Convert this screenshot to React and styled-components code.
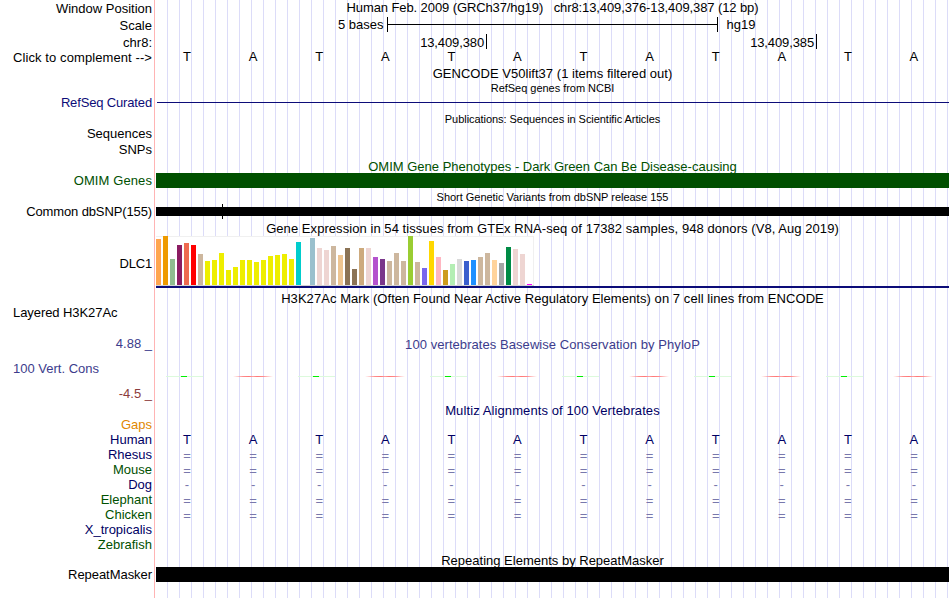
import React from "react";
import styled, { createGlobalStyle } from "styled-components";

const BASES = "TATATATATATA".split("");

// height in px and colour of every GTEx tissue
const TISSUES = [
  [46, "#ffa54f"], [49, "#ee9a00"], [26, "#8fbc8f"], [40, "#8b1c62"],
  [42, "#ee6a50"], [40, "#ff0000"], [31, "#cdb79e"], [24, "#eeee00"],
  [25, "#eeee00"], [32, "#eeee00"], [15, "#eeee00"], [18, "#eeee00"],
  [25, "#eeee00"], [25, "#eeee00"], [23, "#eeee00"], [25, "#eeee00"],
  [29, "#eeee00"], [30, "#eeee00"], [31, "#eeee00"], [26, "#eeee00"],
  [43, "#00cdcd"], [0, "#ee82ee"], [47, "#9ac0cd"], [37, "#eed5d2"],
  [35, "#eed5d2"], [39, "#cdb79e"], [30, "#eec591"], [37, "#8b7355"],
  [16, "#8b7355"], [37, "#cdaa7d"], [37, "#eed5d2"], [28, "#b452cd"],
  [26, "#7a378b"], [24, "#cdb79e"], [32, "#cdb79e"], [24, "#cdb79e"],
  [49, "#9acd32"], [23, "#cdb79e"], [17, "#7a67ee"], [44, "#ffd700"],
  [28, "#ffb6c1"], [15, "#cd9b1d"], [21, "#b4eeb4"], [26, "#d9d9d9"],
  [24, "#3a5fcd"], [25, "#1e90ff"], [28, "#cdb79e"], [32, "#cdb79e"],
  [25, "#ffd39b"], [22, "#a6a6a6"], [38, "#008b45"], [36, "#eed5d2"],
  [31, "#eed5d2"], [1, "#ff00ff"],
];

const SPECIES = [
  { name: "Rhesus", color: "#000064", mark: "=" },
  { name: "Mouse", color: "#005000", mark: "=" },
  { name: "Dog", color: "#000064", mark: "-" },
  { name: "Elephant", color: "#005000", mark: "=" },
  { name: "Chicken", color: "#005000", mark: "=" },
  { name: "X_tropicalis", color: "#000064" },
  { name: "Zebrafish", color: "#005000" },
];

const Track = ({ height, label, color, top, spacing, left, children }) => (
  <Row $height={height}>
    <Side $left={left}>
      <Label $color={color} $top={top} $spacing={spacing}>
        {label}
      </Label>
    </Side>
    <Data>{children}</Data>
  </Row>
);

const Sequence = ({ items, color, top = -1 }) => (
  <Letters $color={color} $top={top}>
    {items.map((item, i) => (
      <span key={i}>{item}</span>
    ))}
  </Letters>
);

const App = () => {
  return (
    <>
      <GlobalStyle />
      <Browser>
        <Track height={17} label="Window Position" top={1}>
          <Title $spacing={-0.1}>
            Human Feb. 2009 (GRCh37/hg19) &nbsp; chr8:13,409,376-13,409,387 (12 bp)
          </Title>
        </Track>
        <Track height={17} label="Scale" top={1}>
          <Scale>
            <span>5 bases</span>
            <Ruler />
            <span>hg19</span>
          </Scale>
        </Track>
        <Track height={16} label="chr8:" top={1}>
          <Positions>
            <Position>13,409,380</Position>
            <Position>13,409,385</Position>
          </Positions>
        </Track>
        <Track height={16} label="Click to complement -->" spacing={0.09}>
          <Sequence items={BASES} />
        </Track>
        <Track height={16}>
          <Title $spacing={0.03}>GENCODE V50lift37 (1 items filtered out)</Title>
        </Track>
        <Track height={13}>
          <SmallTitle $spacing={-0.03}>RefSeq genes from NCBI</SmallTitle>
        </Track>
        <Track
          height={17}
          label="RefSeq Curated"
          color="#0c0c78"
          spacing={-0.15}
        >
          <Intron />
        </Track>
        <Track height={14}>
          <SmallTitle $top={1} $spacing={-0.05}>
            Publications: Sequences in Scientific Articles
          </SmallTitle>
        </Track>
        <Track height={16} label="Sequences" />
        <Track height={16} label="SNPs" />
        <Track height={15}>
          <Title $top={1} $color="#005000">
            OMIM Gene Phenotypes - Dark Green Can Be Disease-causing
          </Title>
        </Track>
        <Track height={15} label="OMIM Genes" color="#005000" spacing={0.1}>
          <Block $color="#005000" />
        </Track>
        <Track height={16}>
          <SmallTitle $top={3} $spacing={-0.03}>
            Short Genetic Variants from dbSNP release 155
          </SmallTitle>
        </Track>
        <Track height={15} label="Common dbSNP(155)" spacing={-0.12}>
          <Variants>
            <Insertion />
          </Variants>
        </Track>
        <Track height={17}>
          <Title $top={2} $spacing={0.06}>
            Gene Expression in 54 tissues from GTEx RNA-seq of 17382 samples,
            948 donors (V8, Aug 2019)
          </Title>
        </Track>
        <Track height={52} label="DLC1" top={20} spacing={-0.2}>
          <Chart>
            {TISSUES.map(([height, color], i) => (
              <Bar key={i} $color={color} style={{ height }} />
            ))}
          </Chart>
          <GeneLine />
        </Track>
        <Track height={18}>
          <Title $top={3} $spacing={0.06}>
            H3K27Ac Mark (Often Found Near Active Regulatory Elements) on 7
            cell lines from ENCODE
          </Title>
        </Track>
        <Track
          height={31}
          label="Layered H3K27Ac"
          top={-1}
          spacing={-0.07}
          left
        />
        <Track height={16} label="4.88 _" color="#3c3c8c" top={-1}>
          <Title $color="#3c3c8c" $spacing={0.06}>
            100 vertebrates Basewise Conservation by PhyloP
          </Title>
        </Track>
        <Track height={32} label="100 Vert. Cons" color="#3c3c8c" top={8} left>
          <Conservation>
            {BASES.map((base, i) =>
              base === "T" ? <Conserved key={i} /> : <Fast key={i} />
            )}
          </Conservation>
        </Track>
        <Track height={17} label="-4.5 _" color="#8c3c3c" top={1} />
        <Track height={16}>
          <Title $top={1} $color="#000064" $spacing={0.1}>
            Multiz Alignments of 100 Vertebrates
          </Title>
        </Track>
        <Track height={15} label="Gaps" color="#e18700" top={-1} />
        <Track height={15} label="Human" color="#000064" top={-1}>
          <Sequence items={BASES} color="#000064" />
        </Track>
        {SPECIES.map(({ name, color, mark }) => (
          <Track key={name} height={15} label={name} color={color} top={-1}>
            {mark && (
              <Sequence
                items={BASES.map(() => mark)}
                color="#7878ac"
                top={mark === "=" ? 0 : -1}
              />
            )}
          </Track>
        ))}
        <Track height={14}>
          <Title>Repeating Elements by RepeatMasker</Title>
        </Track>
        <Track height={15} label="RepeatMasker" spacing={-0.05}>
          <Block $color="#000" />
        </Track>
        <Track height={16} />
      </Browser>
    </>
  );
};

export default App;

const GlobalStyle = createGlobalStyle`
  body {
    margin: 0;
    background: white;
    overflow: hidden;
  }
`;

const Browser = styled.div`
  width: 950px;
  height: 598px;
  display: flex;
  flex-direction: column;
  color: black;
  font: 13px/15px "Liberation Sans", Arial, sans-serif;
  white-space: nowrap;
  background: repeating-linear-gradient(
      to right,
      #dcdcf8 0 1px,
      transparent 1px 12px
    )
    167px 0 / 792px 100% no-repeat white;
`;

const Row = styled.div`
  display: grid;
  grid-template-columns: 156px 793px;
  height: ${(props) => props.$height}px;
`;

const Side = styled.div`
  display: flex;
  justify-content: ${(props) => (props.$left ? "flex-start" : "flex-end")};
  padding: 0 4px 0 13px;
  background: linear-gradient(#ffb4b4, #ffb4b4) 154px 0 / 1px 100% no-repeat
    white;
`;

const Label = styled.div`
  height: 15px;
  margin-top: ${(props) => props.$top || 0}px;
  color: ${(props) => props.$color || "black"};
  letter-spacing: ${(props) => props.$spacing || 0}px;
`;

const Data = styled.div`
  display: flex;
  flex-direction: column;
  min-width: 0;
`;

const Title = styled.div`
  margin-top: ${(props) => props.$top || 0}px;
  color: ${(props) => props.$color || "black"};
  letter-spacing: ${(props) => props.$spacing || 0}px;
  text-align: center;
`;

const SmallTitle = styled(Title)`
  font-size: 11px;
  line-height: 13px;
`;

const Scale = styled.div`
  display: flex;
  padding-left: 182px;
`;

const Ruler = styled.div`
  width: 329px;
  height: 15px;
  margin: 0 9px 0 3px;
  border: solid black;
  border-width: 0 1px;
  background: linear-gradient(black, black) 0 7px / 100% 1px no-repeat;
`;

const Positions = styled.div`
  display: flex;
  padding-left: 1px;
`;

const Position = styled.div`
  box-sizing: border-box;
  width: 330px;
  height: 15px;
  padding: 1px 2px 0 0;
  border-right: 1px solid black;
  letter-spacing: -0.12px;
  text-align: right;
`;

const Letters = styled.div`
  display: grid;
  grid-template-columns: repeat(12, 1fr);
  margin: ${(props) => props.$top}px 2px 0 -2px;
  color: ${(props) => props.$color || "black"};
  text-align: center;
`;

const Intron = styled.div`
  height: 1px;
  margin: 7px 0 0 1px;
  background: #0c0c78;
`;

const Block = styled.div`
  flex: 1;
  background: ${(props) => props.$color};
`;

const Variants = styled.div`
  flex: 1;
  padding-left: 66px;
  background: linear-gradient(black, black) 0 3px / 100% 9px no-repeat;
`;

const Insertion = styled.div`
  width: 1px;
  height: 15px;
  background: black;
`;

const Chart = styled.div`
  box-sizing: border-box;
  display: flex;
  align-items: flex-end;
  gap: 2px;
  width: 378px;
  height: 50px;
  border-bottom: 1px solid #d2d2d2;
  background: linear-gradient(#f0f0f0, #f0f0f0) 0 0 / 100% 1px no-repeat white;
  box-shadow: inset -1px 0 #f0f0f0;
`;

const Bar = styled.div`
  width: 5px;
  background: ${(props) => props.$color};
`;

const GeneLine = styled.div`
  height: 2px;
  background: #0c0c78;
`;

const Conservation = styled.div`
  display: grid;
  grid-template-columns: repeat(12, 66px);
  margin: 23px 0 0 -2px;
`;

const Conserved = styled.div`
  width: 37px;
  height: 1px;
  margin-left: 12px;
  background: linear-gradient(#00f000, #00f000) 15px 0 / 6px 1px no-repeat
    #dcfadc;
`;

const Fast = styled.div`
  width: 40px;
  height: 1px;
  margin-left: 13px;
  background: linear-gradient(
    to right,
    transparent,
    #ff8c8c 25%,
    #ff7878 40%,
    #ffa0a0 50%,
    #ff7878 60%,
    #ff8c8c 75%,
    transparent
  );
`;
